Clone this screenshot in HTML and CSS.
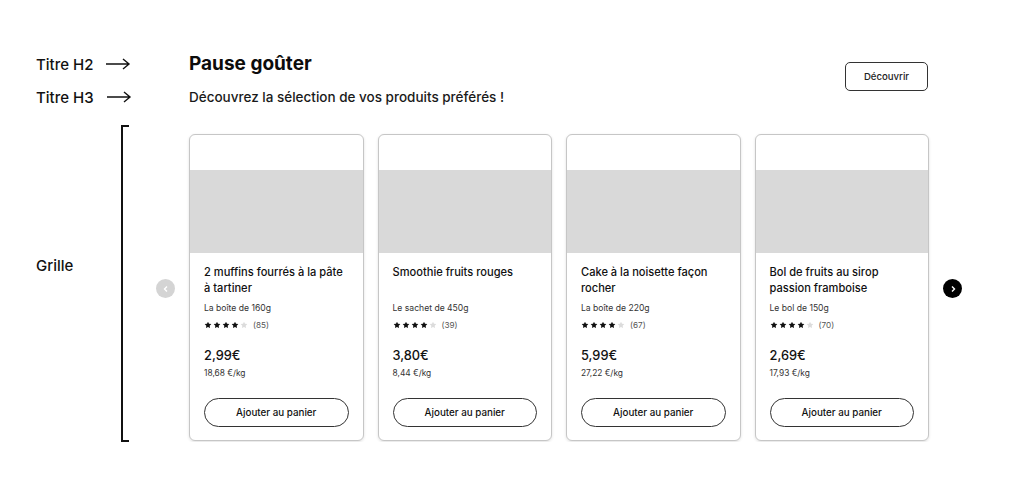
FILE: index.html
```html
<!DOCTYPE html>
<html lang="fr">
<head>
<meta charset="utf-8">
<title>Pause goûter</title>
<link rel="stylesheet" href="styles.css">
</head>
<body>
<svg width="0" height="0" class="defs">
  <defs>
    <symbol id="star" viewBox="0 0 24 24"><path d="M12 2l3.09 6.26L22 9.27l-5 4.87 1.18 6.88L12 17.77l-6.18 3.25L7 14.14 2 9.27l6.91-1.01z"/></symbol>
    <symbol id="arrow" viewBox="0 0 26 12"><path d="M1 6h23M18 1l6 5-6 5" fill="none" stroke="currentColor" stroke-width="1.4" stroke-linejoin="miter"/></symbol>
  </defs>
</svg>
<div class="page">
  <div class="note note-h2">Titre H2 <svg class="note-arrow"><use href="#arrow"/></svg></div>
  <h2 class="title-h2">Pause goûter</h2>
  <button class="discover">Découvrir</button>

  <div class="note note-h3">Titre H3 <svg class="note-arrow"><use href="#arrow"/></svg></div>
  <h3 class="title-h3">Découvrez la sélection de vos produits préférés !</h3>

  <div class="grid-note">
    <span class="grid-note-text">Grille</span>
    <span class="bracket"></span>
  </div>

  <div class="carousel">
    <button class="nav nav-prev" aria-label="Précédent"><svg viewBox="0 0 8 8"><path d="M5 1.5L2.5 4 5 6.5" fill="none" stroke="#fff" stroke-width="1.4"/></svg></button>
    <div class="cards">
      <article class="card">
        <div class="card-top"></div>
        <div class="card-img"></div>
        <div class="card-body">
          <p class="name">2 muffins fourrés à la pâte à tartiner</p>
          <p class="pack">La boîte de 160g</p>
          <div class="rating">
            <span class="stars"><svg><use href="#star"/></svg><svg><use href="#star"/></svg><svg><use href="#star"/></svg><svg><use href="#star"/></svg><svg class="off"><use href="#star"/></svg></span>
            <span class="count">(85)</span>
          </div>
          <p class="price">2,99€</p>
          <p class="perkg">18,68 €/kg</p>
          <button class="add">Ajouter au panier</button>
        </div>
      </article>
      <article class="card">
        <div class="card-top"></div>
        <div class="card-img"></div>
        <div class="card-body">
          <p class="name">Smoothie fruits rouges</p>
          <p class="pack">Le sachet de 450g</p>
          <div class="rating">
            <span class="stars"><svg><use href="#star"/></svg><svg><use href="#star"/></svg><svg><use href="#star"/></svg><svg><use href="#star"/></svg><svg class="off"><use href="#star"/></svg></span>
            <span class="count">(39)</span>
          </div>
          <p class="price">3,80€</p>
          <p class="perkg">8,44 €/kg</p>
          <button class="add">Ajouter au panier</button>
        </div>
      </article>
      <article class="card">
        <div class="card-top"></div>
        <div class="card-img"></div>
        <div class="card-body">
          <p class="name">Cake à la noisette façon rocher</p>
          <p class="pack">La boîte de 220g</p>
          <div class="rating">
            <span class="stars"><svg><use href="#star"/></svg><svg><use href="#star"/></svg><svg><use href="#star"/></svg><svg><use href="#star"/></svg><svg class="off"><use href="#star"/></svg></span>
            <span class="count">(67)</span>
          </div>
          <p class="price">5,99€</p>
          <p class="perkg">27,22 €/kg</p>
          <button class="add">Ajouter au panier</button>
        </div>
      </article>
      <article class="card">
        <div class="card-top"></div>
        <div class="card-img"></div>
        <div class="card-body">
          <p class="name">Bol de fruits au sirop passion framboise</p>
          <p class="pack">Le bol de 150g</p>
          <div class="rating">
            <span class="stars"><svg><use href="#star"/></svg><svg><use href="#star"/></svg><svg><use href="#star"/></svg><svg><use href="#star"/></svg><svg class="off"><use href="#star"/></svg></span>
            <span class="count">(70)</span>
          </div>
          <p class="price">2,69€</p>
          <p class="perkg">17,93 €/kg</p>
          <button class="add">Ajouter au panier</button>
        </div>
      </article>
    </div>
    <button class="nav nav-next" aria-label="Suivant"><svg viewBox="0 0 8 8"><path d="M3 1.5L5.5 4 3 6.5" fill="none" stroke="#fff" stroke-width="1.4"/></svg></button>
  </div>
</div>
</body>
</html>
```

FILE: styles.css
```css
* { box-sizing: border-box; }

html, body {
  margin: 0;
  background: #fff;
}

body {
  font-family: Inter, "Noto Sans", "Liberation Sans", sans-serif;
  color: #111;
}

.defs { position: absolute; }

.page {
  display: grid;
  grid-template-columns: 153px 740px;
  grid-template-rows: 26px 20px auto;
  row-gap: 10px;
  padding: 51px 0 0 36px;
}

.note {
  display: flex;
  align-items: center;
  gap: 12px;
  font-size: 15px;
  font-weight: 500;
  color: #111;
  white-space: nowrap;
}

.note-h2 { grid-row: 1; grid-column: 1; }
.note-h3 { grid-row: 2; grid-column: 1; }

.note-arrow {
  width: 26px;
  height: 12px;
  color: #111;
}

.title-h2 {
  grid-row: 1;
  grid-column: 2;
  margin: 0;
  font-size: 19px;
  line-height: 26px;
  font-weight: 700;
  color: #0c0c0c;
}

.title-h3 {
  grid-row: 2;
  grid-column: 2;
  margin: 0;
  font-size: 13.5px;
  line-height: 20px;
  font-weight: 500;
  color: #1a1a1a;
}

.discover {
  grid-row: 1 / span 2;
  grid-column: 2;
  justify-self: end;
  align-self: start;
  margin: 11px 1px 0 0;
  width: 83px;
  height: 29px;
  padding: 0;
  border: 1px solid #333;
  border-radius: 5px;
  background: #fff;
  font-family: inherit;
  font-size: 9.6px;
  font-weight: 500;
  color: #222;
}

.grid-note {
  grid-row: 3;
  grid-column: 1;
  display: flex;
  margin-top: 8px;
}

.grid-note-text {
  width: 85px;
  padding-top: 132px;
  font-size: 15px;
  line-height: 18px;
  font-weight: 500;
}

.bracket {
  width: 8px;
  height: 317px;
  border: 2px solid #111;
  border-right: none;
}

.carousel {
  grid-row: 3;
  grid-column: 2;
  position: relative;
  margin-top: 8px;
  padding-top: 9px;
}

.cards {
  display: grid;
  grid-template-columns: repeat(4, 1fr);
  column-gap: 14px;
}

.card {
  display: flex;
  flex-direction: column;
  border: 1px solid #c6c6c6;
  border-radius: 6px;
  overflow: hidden;
  background: #fff;
  box-shadow: 0 1px 3px rgba(0, 0, 0, 0.12);
}

.card-top { height: 35px; }

.card-img {
  height: 83px;
  background: #d9d9d9;
}

.card-body {
  display: flex;
  flex-direction: column;
  padding: 11px 14px 13px;
}

.card-body p { margin: 0; }

.name {
  height: 32px;
  font-size: 11.1px;
  line-height: 16px;
  font-weight: 500;
  color: #111;
}

.pack {
  margin-top: 5px !important;
  font-size: 8.6px;
  line-height: 14px;
  color: #333;
}

.rating {
  display: flex;
  align-items: center;
  gap: 5px;
  height: 14px;
  margin-top: 3px;
}

.stars {
  display: flex;
  gap: 1px;
}

.stars svg {
  width: 8px;
  height: 8px;
  fill: #111;
}

.stars svg.off { fill: #dcdcdc; }

.count {
  font-size: 8.2px;
  color: #555;
}

.price {
  margin-top: 15px !important;
  font-size: 12.8px;
  line-height: 18px;
  font-weight: 500;
  color: #111;
}

.perkg {
  margin-top: 2px !important;
  font-size: 8.4px;
  line-height: 13px;
  color: #333;
}

.add {
  margin-top: 18px;
  height: 29px;
  width: 100%;
  padding: 0;
  border: 1px solid #333;
  border-radius: 15px;
  background: #fff;
  font-family: inherit;
  font-size: 9.8px;
  font-weight: 500;
  color: #111;
}

.nav {
  position: absolute;
  top: 154px;
  width: 19px;
  height: 19px;
  padding: 0;
  border: none;
  border-radius: 50%;
  display: flex;
  align-items: center;
  justify-content: center;
}

.nav svg { width: 8px; height: 8px; }

.nav-prev { left: -33px; background: #d4d4d4; }
.nav-next { right: -33px; background: #000; }
```
